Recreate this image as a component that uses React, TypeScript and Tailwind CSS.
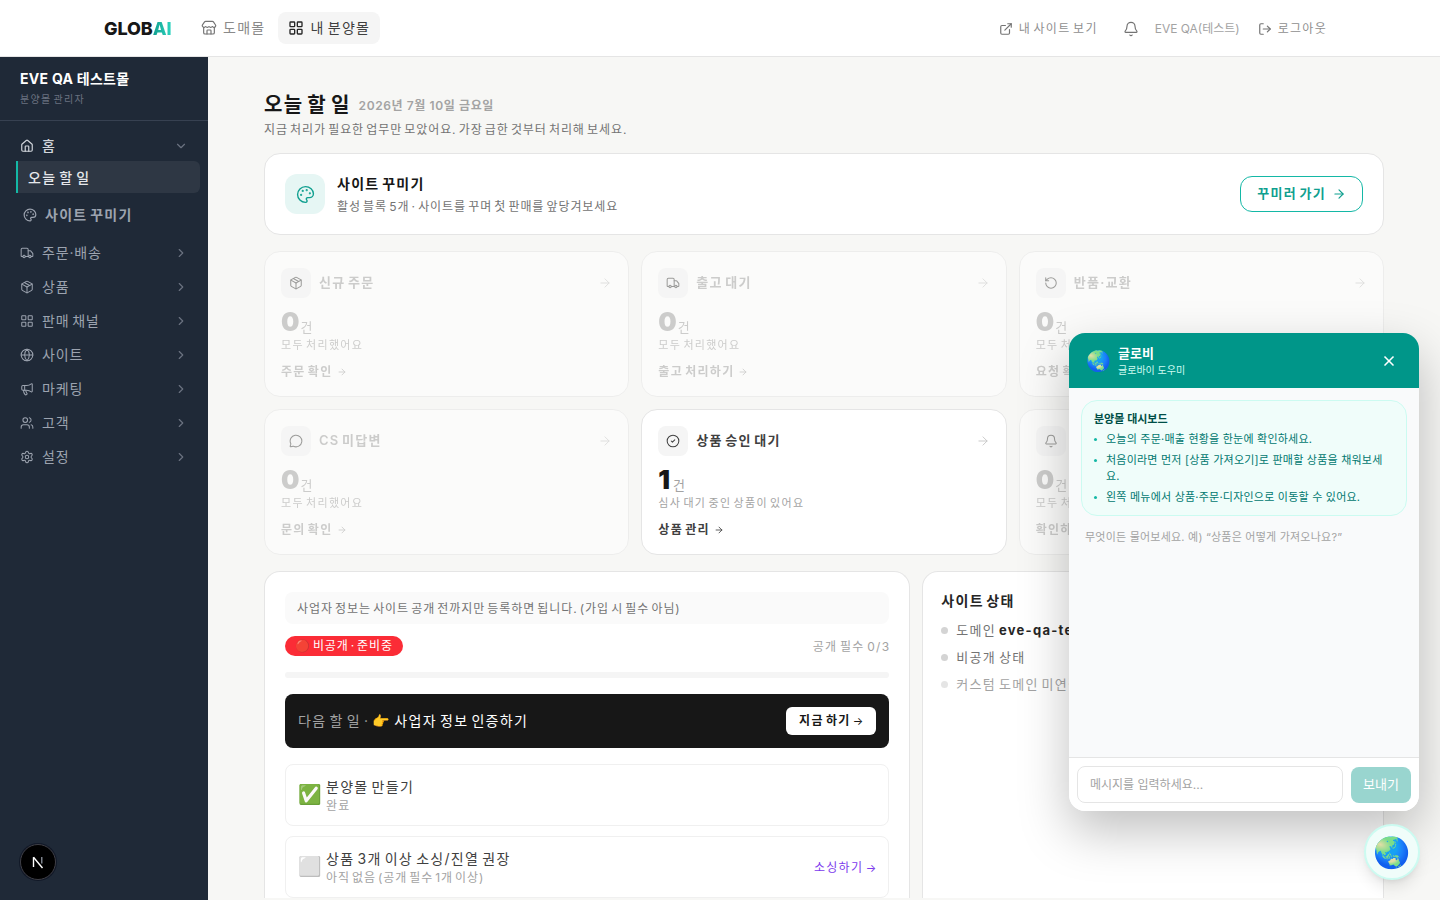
import {
  ArrowRight,
  Bell,
  ChevronDown,
  ChevronRight,
  CircleCheck,
  ExternalLink,
  Globe,
  House,
  LayoutGrid,
  LogOut,
  Megaphone,
  MessageCircle,
  Package,
  Palette,
  RotateCcw,
  Settings,
  Store,
  Truck,
  Users,
  X,
} from "lucide-react";

const font = {
  fontFamily: 'Inter, "Noto Sans CJK KR", "Noto Color Emoji", sans-serif',
};

const menu = [
  { label: "주문·배송", icon: Truck },
  { label: "상품", icon: Package },
  { label: "판매 채널", icon: LayoutGrid },
  { label: "사이트", icon: Globe },
  { label: "마케팅", icon: Megaphone },
  { label: "고객", icon: Users },
  { label: "설정", icon: Settings },
];

const tasks = [
  { title: "신규 주문", icon: Package, count: "0", note: "모두 처리했어요", link: "주문 확인", off: true },
  { title: "출고 대기", icon: Truck, count: "0", note: "모두 처리했어요", link: "출고 처리하기", off: true },
  { title: "반품·교환", icon: RotateCcw, count: "0", note: "모두 처리했어요", link: "요청 확인", off: true },
  { title: "CS 미답변", icon: MessageCircle, count: "0", note: "모두 처리했어요", link: "문의 확인", off: true },
  { title: "상품 승인 대기", icon: CircleCheck, count: "1", note: "심사 대기 중인 상품이 있어요", link: "상품 관리", off: false },
  { title: "알림", icon: Bell, count: "0", note: "모두 처리했어요", link: "확인하기", off: true },
];

const guide = [
  "오늘의 주문·매출 현황을 한눈에 확인하세요.",
  "처음이라면 먼저 [상품 가져오기]로 판매할 상품을 채워보세요.",
  "왼쪽 메뉴에서 상품·주문·디자인으로 이동할 수 있어요.",
];

function Header() {
  return (
    <header className="flex h-[57px] shrink-0 items-center border-b border-[#e5e5e5] bg-white pr-[113px] pl-[104px]">
      <span className="w-[89px] text-[18px] font-extrabold tracking-[-0.1px] text-[#171717]">
        GLOB<span className="bg-gradient-to-r from-[#0f9f8f] to-[#2dd4bf] bg-clip-text text-transparent">AI</span>
      </span>
      <a className="flex h-8 items-center gap-1.5 rounded-lg px-2 text-sm text-[#8a8a8a]">
        <Store className="size-4 text-[#737373]" strokeWidth={1.75} />
        도매몰
      </a>
      <a className="ml-[5px] flex h-8 items-center gap-1.5 rounded-lg bg-[#f5f5f5] px-2.5 text-sm text-[#404040]">
        <LayoutGrid className="size-4 text-[#262626]" strokeWidth={2} />
        내 분양몰
      </a>
      <div className="ml-auto flex items-center pt-px text-xs text-[#a3a3a3]">
        <a className="flex items-center gap-1.5 text-[#8f8f8f]">
          <ExternalLink className="size-3.5 text-[#737373]" />
          내 사이트 보기
        </a>
        <Bell className="ml-[25px] size-4 text-[#737373]" strokeWidth={1.75} />
        <span className="ml-4 tracking-normal [word-spacing:0]">EVE QA(테스트)</span>
        <a className="ml-[18px] flex items-center gap-1.5 text-[#8f8f8f]">
          <LogOut className="size-3.5 text-[#737373]" />
          로그아웃
        </a>
      </div>
    </header>
  );
}

function Sidebar() {
  return (
    <aside className="flex w-[208px] shrink-0 flex-col bg-[#1f2937]">
      <div className="h-[64px] border-b border-[#374151] px-5 pt-[13px]">
        <p className="text-sm leading-[18px] font-bold tracking-[0.02em] [word-spacing:0] text-white">EVE QA 테스트몰</p>
        <p className="mt-[4px] text-[10px] leading-[14px] text-[#6b7280]">분양몰 관리자</p>
      </div>
      <nav className="flex-1 px-2 pt-[9px]">
        <div className="flex h-[31px] items-center px-3 text-sm font-medium text-[#d1d5db]">
          <House className="mr-2 size-3.5" />
          홈
          <ChevronDown className="ml-auto size-3.5 text-[#6b7280]" />
        </div>
        <div className="ml-2 flex h-8 items-center rounded-r-md border-l-2 border-[#14b8a6] bg-[#2e3744] pt-px pl-2.5 text-sm font-medium text-[#e5e7eb]">
          오늘 할 일
        </div>
        <div className="mt-[6px] mb-[6px] flex h-8 items-center pl-[15px] text-sm font-semibold text-[#9ca3af]">
          <Palette className="mr-[8px] size-3.5" />
          사이트 꾸미기
        </div>
        {menu.map((item) => (
          <div key={item.label} className="mt-[2px] flex h-8 items-center px-3 text-sm tracking-[0.06em] text-[#9ca3af]">
            <item.icon className="mr-2 size-3.5" strokeWidth={1.75} />
            {item.label}
            <ChevronRight className="ml-auto size-3.5 text-[#6b7280]" />
          </div>
        ))}
      </nav>
      <div className="px-5 pb-5">
        <div className="flex size-9 items-center justify-center rounded-full border border-[#3f3f46] bg-black shadow-[0_0_0_1px_#111827]">
          <svg viewBox="0 0 14 14" className="size-3.5" fill="none">
            <path d="M2.5 12V2.2" stroke="#fff" strokeWidth="1.4" />
            <path d="M2.5 2.2 11.5 13" stroke="#fff" strokeWidth="1.4" />
            <path d="M10.8 2v6.5" stroke="#9ca3af" strokeWidth="1.2" />
          </svg>
        </div>
      </div>
    </aside>
  );
}

function TaskCard({ task }: { task: (typeof tasks)[number] }) {
  return (
    <div className={`h-[146px] rounded-2xl border border-[#e5e5e5] bg-white px-4 pt-4 ${task.off ? "opacity-50" : ""}`}>
      <div className="flex items-center">
        <span className="flex size-[30px] items-center justify-center rounded-lg bg-[#f5f5f5]">
          <task.icon className="size-3.5 text-[#404040]" strokeWidth={1.75} />
        </span>
        <span className={`mb-[1px] ml-2 text-[13px] font-semibold ${task.off ? "text-[#a3a3a3]" : "text-[#404040]"}`}>
          {task.title}
        </span>
        <ArrowRight className="ml-auto size-3.5 text-[#c4c4c4]" strokeWidth={1.5} />
      </div>
      <div className="mt-[17px] flex h-[20px] items-end">
        <span className={`text-[26px] leading-[26px] font-black tracking-normal ${task.off ? "text-[#a3a3a3]" : "text-[#171717]"}`}>
          {task.count}
        </span>
        <span className={`mb-[1px] text-[13px] leading-[14px] tracking-normal text-[#a3a3a3] ${task.off ? "ml-[1px]" : "ml-[3px]"}`}>건</span>
      </div>
      <p className="mt-[2px] text-[11px] leading-[16px] text-[#a3a3a3]">{task.note}</p>
      <p className={`mt-[11px] flex items-center gap-1 text-xs leading-[16px] font-semibold ${task.off ? "text-[#a3a3a3]" : "text-[#404040]"}`}>
        {task.link}
        <ArrowRight className="size-2.5" />
      </p>
    </div>
  );
}

function Checklist() {
  return (
    <div className="rounded-t-2xl border border-b-0 border-[#e5e5e5] bg-white px-5 pt-5">
      <div className="h-8 rounded-lg bg-[#fafafa] px-3 text-xs leading-[33px] tracking-[0.076em] text-[#737373]">
        사업자 정보는 사이트 공개 전까지만 등록하면 됩니다. (가입 시 필수 아님)
      </div>
      <div className="mt-3 flex items-center justify-between">
        <span className="rounded-full bg-[#fb2c36] px-2.5 text-xs leading-5 tracking-[0.07em] text-white">
          🔴 비공개 · 준비중
        </span>
        <span className="-mr-px pt-px text-xs text-[#a3a3a3]">공개 필수 0/3</span>
      </div>
      <div className="mt-4 h-1.5 rounded-full bg-[#f5f5f5]" />
      <div className="mt-4 flex h-[54px] items-center justify-between rounded-lg bg-[#171717] px-[13px]">
        <p className="text-sm text-[#a3a3a3]">
          다음 할 일 · <span className="text-white">👉 사업자 정보 인증하기</span>
        </p>
        <span className="rounded-md bg-white px-[13px] py-1.5 text-xs font-semibold text-[#171717]">
          지금 하기 <span className="text-[11px] font-normal tracking-normal">→</span>
        </span>
      </div>
      <div className="mt-4 flex h-[62px] items-center rounded-lg border border-[#f0f0f0] px-3">
        <span className="w-[28px] text-[19px]">✅</span>
        <div className="pt-[2px]">
          <p className="text-sm leading-[18px] text-[#404040]">분양몰 만들기</p>
          <p className="mt-[1px] text-xs leading-[17px] text-[#a3a3a3]">완료</p>
        </div>
      </div>
      <div className="mt-[10px] flex h-[62px] items-center rounded-lg border border-[#f0f0f0] px-3">
        <span className="w-[28px] text-[19px]">⬜️</span>
        <div className="pt-[2px]">
          <p className="text-sm leading-[18px] text-[#404040]">상품 3개 이상 소싱/진열 권장</p>
          <p className="mt-[1px] text-xs leading-[17px] tracking-[0.073em] text-[#a3a3a3]">아직 없음 (공개 필수 1개 이상)</p>
        </div>
        <span className="ml-auto pt-[2px] text-xs text-[#7c3aed]">
          소싱하기 <span className="text-[11px] tracking-normal">→</span>
        </span>
      </div>
    </div>
  );
}

function SiteStatus() {
  return (
    <div className="rounded-t-2xl border border-b-0 border-[#e5e5e5] bg-white px-[18px] pt-[19px]">
      <p className="text-sm font-bold text-[#262626]">사이트 상태</p>
      <ul className="mt-[10px] flex flex-col gap-[9px] text-[13px] leading-[18px]">
        <li className="flex items-center gap-2 whitespace-nowrap text-[#737373]">
          <span className="size-[7px] rounded-full bg-[#d4d4d4]" />
          <span>도메인 <b className="font-bold text-[#262626]">eve-qa-test.globai.kr</b></span>
        </li>
        <li className="flex items-center gap-2 text-[#737373]">
          <span className="size-[7px] rounded-full bg-[#d4d4d4]" />
          비공개 상태
        </li>
        <li className="flex items-center gap-2 text-[#a3a3a3]">
          <span className="size-[7px] rounded-full bg-[#e5e5e5]" />
          커스텀 도메인 미연결
        </li>
      </ul>
    </div>
  );
}

function ChatPanel() {
  return (
    <div className="absolute top-[333px] left-[1069px] flex h-[478px] w-[350px] flex-col overflow-hidden rounded-2xl bg-[#f9fafb] shadow-[0_20px_50px_rgba(0,0,0,0.25)]">
      <div className="flex h-[55px] shrink-0 items-center bg-[#009689] pr-[22px] pl-[17px]">
        <span className="w-[32px] text-[20px] leading-none">🌏</span>
        <div>
          <p className="mb-[2px] text-[13px] leading-[16px] font-semibold text-white">글로비</p>
          <p className="text-[10px] leading-[14px] text-[#ccfbf1]">글로바이 도우미</p>
        </div>
        <X className="ml-auto size-4 text-white" strokeWidth={2.5} />
      </div>
      <div className="flex-1 p-3">
        <div className="rounded-2xl border border-[#ccfbf1] bg-[#f0fdfa] px-3 py-[10px]">
          <p className="text-[11px] leading-[16px] font-semibold text-[#004f47]">분양몰 대시보드</p>
          <ul className="mt-[4px] flex flex-col gap-[5px] text-[11px] leading-[16px] tracking-[0.02em] text-[#00786f]">
            {guide.map((line) => (
              <li key={line} className="flex">
                <span className="mt-[7px] mr-[9px] size-[3px] shrink-0 rounded-full bg-[#14b8a6]" />
                <span>{line}</span>
              </li>
            ))}
          </ul>
        </div>
        <p className="mt-[13px] px-1 text-[11px] leading-4 tracking-[0.02em] text-[#a3a3a3]">
          무엇이든 물어보세요. 예) “상품은 어떻게 가져오나요?”
        </p>
      </div>
      <div className="flex h-[54px] shrink-0 items-center gap-2 border-t border-[#e5e5e5] bg-white px-2">
        <input
          readOnly
          placeholder="메시지를 입력하세요..."
          className="h-[37px] min-w-0 flex-1 rounded-lg border border-[#e5e5e5] px-3 text-xs placeholder:text-[#a3a3a3]"
        />
        <span className="flex h-9 w-[60px] items-center justify-center rounded-lg bg-[#99d5cf] text-[13px] text-white">보내기</span>
      </div>
    </div>
  );
}

export default function App() {
  return (
    <div style={font} className="relative h-screen w-full overflow-hidden bg-[#f7f7f5]">
      <div className="flex h-full flex-col tracking-[0.08em] [word-spacing:-0.13em]">
        <Header />
        <div className="flex min-h-0 flex-1">
          <Sidebar />
          <main className="min-w-0 flex-1 px-14 pt-[34px]">
            <div className="flex items-center gap-2">
              <h1 className="text-[20px] leading-7 font-bold text-[#171717]">오늘 할 일</h1>
              <span className="pt-[2px] text-xs font-semibold tracking-[0.05em] [word-spacing:0] text-[#a3a3a3]">2026년 7월 10일 금요일</span>
            </div>
            <p className="mt-[3px] text-xs leading-4 tracking-[0.076em] text-[#737373]">
              지금 처리가 필요한 업무만 모았어요. 가장 급한 것부터 처리해 보세요.
            </p>
            <div className="mt-[15px] flex h-[82px] items-center rounded-2xl border border-[#e5e5e5] bg-white px-5">
              <span className="flex size-10 items-center justify-center rounded-xl bg-[#e6f6f4]">
                <Palette className="size-[19px] text-[#0f9f8f]" strokeWidth={1.75} />
              </span>
              <div className="ml-3">
                <p className="text-sm leading-[20px] font-semibold text-[#171717]">사이트 꾸미기</p>
                <p className="mt-[5px] text-xs leading-4 tracking-[0.076em] text-[#737373]">활성 블록 5개 · 사이트를 꾸며 첫 판매를 앞당겨보세요</p>
              </div>
              <a className="ml-auto flex h-9 items-center gap-1.5 rounded-xl border border-[#14b8a6] px-4 text-[13px] font-semibold text-[#0f9f8f]">
                꾸미러 가기
                <ArrowRight className="size-3.5" />
              </a>
            </div>
            <div className="mt-4 grid grid-cols-3 gap-3">
              {tasks.map((task) => (
                <TaskCard key={task.title} task={task} />
              ))}
            </div>
            <div className="mt-4 grid grid-cols-[7fr_5fr] gap-3">
              <Checklist />
              <SiteStatus />
            </div>
          </main>
        </div>
      </div>
      <ChatPanel />
      <div className="absolute top-[824px] left-[1364px] flex size-14 items-center justify-center rounded-full border-2 border-[#ccfbf1] bg-[#f0fdfa] text-[30px] leading-none shadow-lg">
        🌏
      </div>
    </div>
  );
}
